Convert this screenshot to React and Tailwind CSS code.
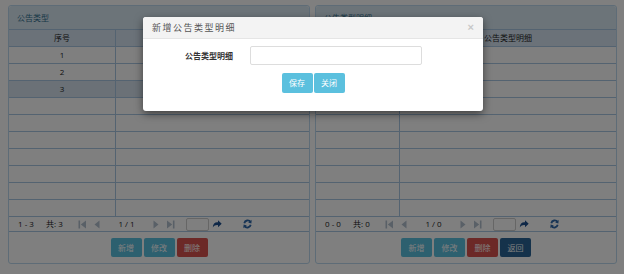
import React from "react";

const CJK = { fontFamily: '"Open Sans","Noto Sans CJK SC",sans-serif' };

function FirstIcon() {
  return (
    <svg width="9" height="9" viewBox="0 0 9 9">
      <rect x="0.5" y="0.5" width="1.6" height="8" fill="#b3c0ce" />
      <path d="M8 0.5 L2.8 4.5 L8 8.5 Z" fill="#b3c0ce" />
    </svg>
  );
}
function PrevIcon() {
  return (
    <svg width="6" height="9" viewBox="0 0 6 9">
      <path d="M5.5 0.5 L0.5 4.5 L5.5 8.5 Z" fill="#b3c0ce" />
    </svg>
  );
}
function NextIcon() {
  return (
    <svg width="6" height="9" viewBox="0 0 6 9">
      <path d="M0.5 0.5 L5.5 4.5 L0.5 8.5 Z" fill="#b3c0ce" />
    </svg>
  );
}
function LastIcon() {
  return (
    <svg width="9" height="9" viewBox="0 0 9 9">
      <path d="M1 0.5 L6.2 4.5 L1 8.5 Z" fill="#b3c0ce" />
      <rect x="6.9" y="0.5" width="1.6" height="8" fill="#b3c0ce" />
    </svg>
  );
}
function GoIcon() {
  return (
    <svg width="10" height="9" viewBox="0 0 10 9">
      <path d="M0.8 7.5 C0.8 3.5 3.5 1.8 6 2.3 L6 0.3 L9.7 3.8 L6 7.3 L6 5.2 C4 4.8 2.3 5.6 0.8 7.5 Z" fill="#1d4f8f" />
    </svg>
  );
}
function RefreshIcon() {
  return (
    <svg width="9" height="10" viewBox="0 0 9 10">
      <path d="M7.6 3.2 A3.4 3.4 0 0 0 1.3 4.2" stroke="#2f68aa" strokeWidth="1.8" fill="none" />
      <path d="M8.6 0.8 L8.4 4.4 L5.2 3.6 Z" fill="#2f68aa" />
      <path d="M1.4 6.8 A3.4 3.4 0 0 0 7.7 5.8" stroke="#2f68aa" strokeWidth="1.8" fill="none" />
      <path d="M0.4 9.2 L0.6 5.6 L3.8 6.4 Z" fill="#2f68aa" />
    </svg>
  );
}

function Btn({ children, color }) {
  return (
    <div
      className={`flex h-[19px] w-[31px] items-center justify-center rounded-[2px] text-[8px] text-white ${color}`}
      style={CJK}
    >
      {children}
    </div>
  );
}

function Panel({ title, col1, col2, col1w, rows, range, total, pageText, buttons, selected }) {
  const all = [...rows];
  while (all.length < 10) all.push("");
  return (
    <div className="flex h-[259px] w-[302px] flex-col rounded-[3px] border border-[#bcd9ee] bg-white">
      <div
        className="flex h-[23px] items-center rounded-t-[3px] bg-[#d9e8f3] pl-[8px] text-[8px] text-[#31708f]"
        style={CJK}
      >
        {title}
      </div>
      <div className="flex h-[18px] border-y border-[#a9c6e2] bg-[#d6e4f2] text-[8px] text-[#222]" style={CJK}>
        <div className="flex items-center justify-center border-r border-[#a9c6e2]" style={{ width: col1w }}>
          {col1}
        </div>
        <div className="flex flex-1 items-center justify-center">{col2}</div>
      </div>
      {all.map((r, i) => (
        <div
          key={i}
          className={`flex h-[17px] border-b border-[#a9c6e2] text-[8px] text-[#222] ${
            i === selected ? "bg-[#d6e2ef]" : ""
          }`}
          style={CJK}
        >
          <div className="flex items-center justify-center border-r border-[#a9c6e2]" style={{ width: col1w }}>
            {r}
          </div>
          <div className="flex-1" />
        </div>
      ))}
      <div className="flex h-[15px] items-center border-b border-[#a9c6e2] text-[8px] text-[#222]" style={CJK}>
        <span className="ml-[9px] w-[28px]">{range}</span>
        <span className="w-[32px]">{total}</span>
        <FirstIcon />
        <span className="w-[7px]" />
        <PrevIcon />
        <span className="flex w-[53px] justify-center">{pageText}</span>
        <NextIcon />
        <span className="w-[7px]" />
        <LastIcon />
        <span className="w-[11px]" />
        <div className="h-[13px] w-[23px] rounded-[2px] border border-[#ccc] bg-white" />
        <span className="w-[3px]" />
        <GoIcon />
        <span className="w-[21px]" />
        <RefreshIcon />
      </div>
      <div className="flex justify-center gap-[2px] pt-[6px]">{buttons}</div>
    </div>
  );
}

export default function App() {
  return (
    <div className="relative h-[274px] w-[624px] overflow-hidden bg-white">
      <div className="flex gap-[5px] pl-[8px] pt-[5px]">
        <Panel
          title="公告类型"
          col1="序号"
          col2=""
          col1w="107px"
          rows={["1", "2", "3"]}
          selected={2}
          range="1 - 3"
          total="共: 3"
          pageText="1 / 1"
          buttons={[
            <Btn key="a" color="bg-[#5bc0de]">新增</Btn>,
            <Btn key="b" color="bg-[#5bc0de]">修改</Btn>,
            <Btn key="c" color="bg-[#d9534f]">删除</Btn>,
          ]}
        />
        <Panel
          title="公告类型明细"
          col1=""
          col2="公告类型明细"
          col1w="84px"
          rows={[]}
          selected={-1}
          range="0 - 0"
          total="共: 0"
          pageText="1 / 0"
          buttons={[
            <Btn key="a" color="bg-[#5bc0de]">新增</Btn>,
            <Btn key="b" color="bg-[#5bc0de]">修改</Btn>,
            <Btn key="c" color="bg-[#d9534f]">删除</Btn>,
            <Btn key="d" color="bg-[#2a6496]">返回</Btn>,
          ]}
        />
      </div>
      <div className="absolute inset-0 bg-black/50" />
      <div className="absolute left-[143px] top-[17px] flex h-[94px] w-[340px] flex-col rounded-[3px] bg-white shadow-[0_3px_9px_rgba(0,0,0,0.5)]">
        <div className="flex h-[22px] items-center justify-between rounded-t-[3px] border-b border-[#e5e5e5] bg-[#f3f3f3] pl-[9px] pr-[9px]">
          <span
            className="text-[9px] tracking-[1.5px] text-[#555]"
            style={{ fontFamily: '"Noto Sans CJK SC",serif' }}
          >
            新增公告类型明细
          </span>
          <span className="text-[11px] font-bold leading-none text-[#c8c8c8]" style={{ fontFamily: '"Liberation Sans",sans-serif' }}>
            ×
          </span>
        </div>
        <div className="flex items-center pt-[7px]">
          <div className="w-[90px] text-right text-[8px] font-bold text-[#333]" style={CJK}>
            公告类型明细
          </div>
          <div className="ml-[17px] h-[19px] w-[172px] rounded-[2px] border border-[#ddd] bg-white" />
        </div>
        <div className="flex justify-center gap-[1px] pt-[8px]">
          <div className="flex h-[20px] w-[31px] items-center justify-center rounded-[2px] bg-[#5bc0de] text-[8px] text-white" style={CJK}>
            保存
          </div>
          <div className="flex h-[20px] w-[31px] items-center justify-center rounded-[2px] bg-[#5bc0de] text-[8px] text-white" style={CJK}>
            关闭
          </div>
        </div>
      </div>
    </div>
  );
}
